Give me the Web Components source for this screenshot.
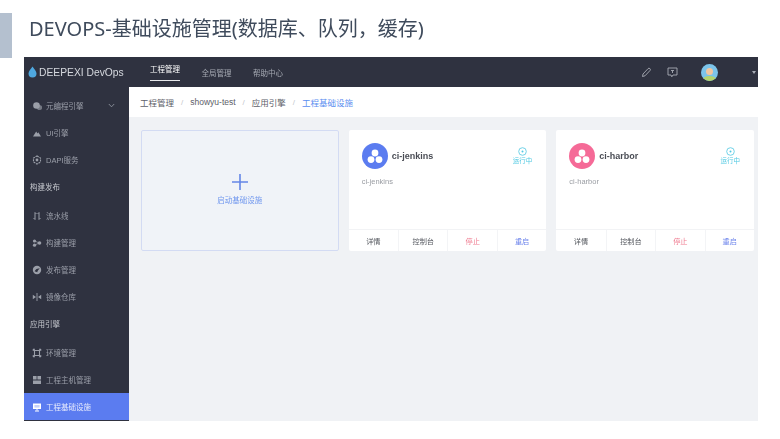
<!DOCTYPE html>
<html lang="zh-CN">
<head>
<meta charset="utf-8">
<title>DEVOPS</title>
<style>
  html, body { margin: 0; background: #fff; }
  body { width: 780px; height: 439px; overflow: hidden; font-family: "Liberation Sans", "Noto Sans CJK SC", sans-serif; }
</style>
</head>
<body>
<slide-page heading="DEVOPS-基础设施管理(数据库、队列，缓存)">
  <app-shell>
    <top-bar slot="top"></top-bar>
    <side-nav slot="side">
      <nav-item icon="chat" label="元编程引擎" arrow></nav-item>
      <nav-item icon="ui" label="UI引擎"></nav-item>
      <nav-item icon="dapi" label="DAPI服务"></nav-item>
      <nav-group label="构建发布"></nav-group>
      <nav-item icon="flow" label="流水线"></nav-item>
      <nav-item icon="build" label="构建管理"></nav-item>
      <nav-item icon="publish" label="发布管理"></nav-item>
      <nav-item icon="mirror" label="镜像仓库"></nav-item>
      <nav-group label="应用引擎"></nav-group>
      <nav-item icon="env" label="环境管理"></nav-item>
      <nav-item icon="host" label="工程主机管理"></nav-item>
      <nav-item icon="infra" label="工程基础设施" active></nav-item>
    </side-nav>
    <bread-crumb slot="crumb"></bread-crumb>
    <add-card label="启动基础设施"></add-card>
    <infra-card name="ci-jenkins" color="#5b7cf0"></infra-card>
    <infra-card name="ci-harbor" color="#f56a97"></infra-card>
  </app-shell>
</slide-page>

<script>
// icons for the side menu
const ICONS = {
  chat: '<circle cx="4.5" cy="4.5" r="3.3" fill="currentColor"/><circle cx="7.5" cy="6.5" r="2.6" fill="currentColor" opacity=".65"/>',
  ui: '<path d="M1 8.5 4.2 3.5 5.5 5.5 6.3 4.2 9 8.5Z" fill="currentColor"/>',
  dapi: '<path d="M5 1 8.5 3v4L5 9 1.5 7V3Z" fill="none" stroke="currentColor" stroke-width="1.1" stroke-dasharray="2 .8"/><circle cx="5" cy="5" r="1.4" fill="currentColor"/>',
  flow: '<path d="M3 1.5v7M3 8.5 1.5 7M3 1.5 4.5 3M7 1.5v7M7 1.5 5.5 3M7 8.5l1.5-1.5" fill="none" stroke="currentColor" stroke-width="1"/>',
  build: '<circle cx="2.5" cy="3" r="1.6" fill="currentColor"/><circle cx="2.5" cy="7.2" r="1.6" fill="currentColor"/><circle cx="7.5" cy="5" r="1.8" fill="currentColor"/><path d="M3 3 7 5 3 7" fill="none" stroke="currentColor" stroke-width=".7"/>',
  publish: '<circle cx="5" cy="5" r="4.2" fill="currentColor"/><path d="M2.6 6.2C4 3.6 6 3.2 7.8 3.6 6.6 4.4 5.8 5.6 5.2 7.2Z" fill="#2f3240"/>',
  mirror: '<path d="M5 1v8" stroke="currentColor" stroke-width=".9"/><path d="M.8 2.8 4 5 .8 7.2ZM9.2 2.8 6 5l3.2 2.2Z" fill="currentColor"/>',
  env: '<path d="M2.5 2.5h5v5h-5Z" fill="none" stroke="currentColor" stroke-width="1.1"/><path d="M1 1h2L1 3ZM9 1H7l2 2ZM1 9h2L1 7ZM9 9H7l2-2Z" fill="currentColor" stroke="currentColor" stroke-width=".5"/>',
  host: '<path d="M1 1h3.6v3.6H1ZM5.4 1H9v3.6H5.4ZM1 5.4h8V9H1Z" fill="currentColor"/>',
  infra: '<path d="M1 1.5h8v5.5H1Z" fill="currentColor"/><path d="M5 7v1.5M3 9h4" stroke="currentColor" stroke-width="1"/><path d="M2.4 3h5.2v2.6H2.4Z" fill="#5b7cf0" opacity=".35"/>'
};

class SlidePage extends HTMLElement {
  constructor() {
    super();
    this.attachShadow({ mode: "open" });
  }
  connectedCallback() {
    this.shadowRoot.innerHTML = `
      <style>
        :host { display: flex; flex-direction: column; width: 780px; height: 439px; filter: blur(.35px); }
        header { height: 57px; display: flex; align-items: flex-start; flex: none; }
        .mark { width: 12px; height: 45px; margin-top: 13px; background: #b4c0cf; }
        h1 { margin: 16px 0 0 17px; font: 400 20px/26px "Noto Sans", "Noto Sans CJK SC", sans-serif; color: #3f4b5c; white-space: nowrap; }
        .body { padding: 0 22px 18px 24px; flex: 1; display: flex; min-height: 0; }
      </style>
      <header><div class="mark"></div><h1>${this.getAttribute("heading")}</h1></header>
      <div class="body"><slot></slot></div>
    `;
  }
}

class AppShell extends HTMLElement {
  constructor() {
    super();
    this.attachShadow({ mode: "open" });
  }
  connectedCallback() {
    this.shadowRoot.innerHTML = `
      <style>
        :host { display: grid; flex: 1; grid-template-columns: 105px 1fr; grid-template-rows: 30px 30px 1fr; background: #f0f2f5; }
        .top { grid-column: 1 / 3; display: flex; }
        .side { grid-row: 2 / 4; display: flex; min-height: 0; }
        .crumb { display: flex; }
        .cards { display: grid; grid-template-columns: repeat(3, 1fr); grid-template-rows: 121px; gap: 10px; padding: 13px 4px 0 12px; }
      </style>
      <div class="top"><slot name="top"></slot></div>
      <div class="side"><slot name="side"></slot></div>
      <div class="crumb"><slot name="crumb"></slot></div>
      <div class="cards"><slot></slot></div>
    `;
  }
}

class TopBar extends HTMLElement {
  constructor() {
    super();
    this.attachShadow({ mode: "open" });
  }
  connectedCallback() {
    this.shadowRoot.innerHTML = `
      <style>
        :host { display: flex; flex: 1; align-items: center; background: #2f3240; color: #fff; height: 30px; }
        .logo { display: flex; align-items: center; width: 126px; flex: none; padding-left: 4px; box-sizing: border-box; font-size: 10.3px; color: #d5d8de; white-space: nowrap; }
        .logo svg { margin-right: 2px; }
        nav { display: flex; gap: 21.5px; align-self: stretch; font-size: 7.5px; color: #a5a9b2; }
        nav span { display: flex; align-items: center; width: 30px; white-space: nowrap; box-sizing: border-box; }
        nav .on { color: #fff; border-bottom: 1px solid #e8e9ec; height: 23.5px; padding-top: 1px; margin-top: 0; }
        .tools { margin-left: auto; display: flex; align-items: center; color: #a9adb6; }
        .pen { margin-right: 15px; }
        .msg { margin-right: 23px; }
        .ava { width: 17px; height: 17px; border-radius: 50%; background: #7cc4ea; position: relative; overflow: hidden; margin-right: 34px; }
        .ava i { position: absolute; left: 5px; top: 4px; width: 7px; height: 7px; border-radius: 50%; background: #f2c6a0; }
        .ava b { position: absolute; left: 2px; top: 12px; width: 13px; height: 6px; background: #b6d46a; border-radius: 50%; }
        .caret { width: 0; height: 0; border: 2.5px solid transparent; border-top: 3px solid #a9adb6; border-bottom: 0; margin-right: 2px; }
      </style>
      <div class="logo">
        <svg width="9" height="12" viewBox="0 0 9 12"><path d="M4.5 .5C6 3 8.5 5 8.5 7.6A4 4 0 0 1 .5 7.6C.5 5 3 3 4.5 .5Z" fill="#4fa8e0"/></svg>
        DEEPEXI DevOps
      </div>
      <nav><span class="on">工程管理</span><span>全局管理</span><span>帮助中心</span></nav>
      <div class="tools">
        <svg class="pen" width="11" height="11" viewBox="0 0 11 11" fill="none" stroke="currentColor" stroke-width=".9"><path d="M1.5 9.5 2 7l5-5.3a1.2 1.2 0 0 1 2 1.8L4 8.8Z"/></svg>
        <svg class="msg" width="11" height="11" viewBox="0 0 11 11" fill="none" stroke="currentColor" stroke-width=".9"><path d="M1 1h9v7H6L4.8 9.8 4 8H1Z"/><path d="M4 3.5h3M5.5 3.5v2.5"/></svg>
        <div class="ava"><i></i><b></b></div>
        <div class="caret"></div>
      </div>
    `;
  }
}

class SideNav extends HTMLElement {
  constructor() {
    super();
    this.attachShadow({ mode: "open" });
  }
  connectedCallback() {
    this.shadowRoot.innerHTML = `
      <style>
        :host { display: flex; flex-direction: column; flex: 1; background: #2f3240; padding-top: 5px; overflow: hidden; }
      </style>
      <slot></slot>
    `;
  }
}

class NavItem extends HTMLElement {
  constructor() {
    super();
    this.attachShadow({ mode: "open" });
  }
  connectedCallback() {
    const icon = ICONS[this.getAttribute("icon")] || "";
    const arrow = this.hasAttribute("arrow")
      ? '<svg class="arrow" width="7" height="5" viewBox="0 0 7 5" fill="none" stroke="currentColor" stroke-width=".8"><path d="M.8 1 3.5 3.8 6.2 1"/></svg>'
      : "";
    this.shadowRoot.innerHTML = `
      <style>
        :host { display: flex; align-items: center; height: 27px; padding-left: 8px; font-size: 7.5px; color: #9b9fa9; white-space: nowrap; flex: none; }
        :host([active]) { background: #5b7cf0; color: #e8ecfd; }
        svg.ico { margin-right: 4px; flex: none; }
        :host([active]) svg.ico { color: #fff; }
        .arrow { margin-left: auto; margin-right: 14px; }
      </style>
      <svg class="ico" width="10" height="10" viewBox="0 0 10 10">${icon}</svg>
      <span>${this.getAttribute("label")}</span>
      ${arrow}
    `;
  }
}

class NavGroup extends HTMLElement {
  constructor() {
    super();
    this.attachShadow({ mode: "open" });
  }
  connectedCallback() {
    this.shadowRoot.innerHTML = `
      <style>
        :host { display: flex; align-items: center; height: 29px; padding: 1px 0 3px 6px; box-sizing: border-box; font-size: 7.5px; color: #c6c8ce; flex: none; }
      </style>
      <span>${this.getAttribute("label")}</span>
    `;
  }
}

class BreadCrumb extends HTMLElement {
  constructor() {
    super();
    this.attachShadow({ mode: "open" });
  }
  connectedCallback() {
    this.shadowRoot.innerHTML = `
      <style>
        :host { display: flex; flex: 1; align-items: center; gap: 7px; background: #fff; padding: 0 0 0 11px; font-size: 8.5px; color: #5d6068; white-space: nowrap; }
        i { font-style: normal; color: #c3c6cc; font-size: 8px; }
        .now { color: #5b8ef0; }
      </style>
      <span>工程管理</span><i>/</i><span>showyu-test</span><i>/</i><span>应用引擎</span><i>/</i><span class="now">工程基础设施</span>
    `;
  }
}

class AddCard extends HTMLElement {
  constructor() {
    super();
    this.attachShadow({ mode: "open" });
  }
  connectedCallback() {
    this.shadowRoot.innerHTML = `
      <style>
        :host { display: flex; flex-direction: column; align-items: center; justify-content: center; box-sizing: border-box; border: 1px solid #d3dbf3; border-radius: 2px; background: #f0f3f8; color: #6f96ee; font-size: 7.5px; padding-bottom: 2px; }
        svg { margin-bottom: 4px; }
      </style>
      <svg width="16" height="16" viewBox="0 0 16 16"><path d="M8 0v16M0 8h16" stroke="#6486e6" stroke-width="1.6"/></svg>
      <span>${this.getAttribute("label")}</span>
    `;
  }
}

class InfraCard extends HTMLElement {
  constructor() {
    super();
    this.attachShadow({ mode: "open" });
  }
  connectedCallback() {
    const name = this.getAttribute("name");
    const color = this.getAttribute("color");
    this.shadowRoot.innerHTML = `
      <style>
        :host { display: flex; flex-direction: column; background: #fff; border-radius: 2px; overflow: hidden; }
        .main { flex: 1; padding: 13px 13px 0 13px; position: relative; }
        .head { display: flex; align-items: center; }
        .logo { width: 26px; height: 26px; border-radius: 50%; background: ${color}; display: flex; align-items: center; justify-content: center; flex: none; margin-right: 4px; }
        .name { font-size: 9px; font-weight: 700; color: #4a4d55; }
        .status { margin-left: auto; display: flex; flex-direction: column; align-items: center; font-size: 6.5px; line-height: 8px; color: #4fc8e2; margin-right: 1px; }
        .status svg { margin-bottom: 1px; }
        .desc { margin-top: 8px; font-size: 7.5px; color: #9a9da3; }
        .foot { height: 21px; flex: none; border-top: 1px solid #f2f3f5; display: grid; grid-template-columns: repeat(4, 1fr); font-size: 7.2px; color: #55585f; }
        .foot span { display: flex; align-items: center; justify-content: center; border-left: 1px solid #f3f4f6; }
        .foot span:first-child { border-left: 0; }
        .stop { color: #ef7a8f; }
        .restart { color: #6f86ec; }
      </style>
      <div class="main">
        <div class="head">
          <div class="logo">
            <svg width="16" height="15" viewBox="0 0 16 15" fill="#fff"><circle cx="8" cy="4" r="3.4"/><circle cx="4" cy="10.6" r="3.4"/><circle cx="12" cy="10.6" r="3.4"/></svg>
          </div>
          <span class="name">${name}</span>
          <div class="status">
            <svg width="9" height="9" viewBox="0 0 9 9"><circle cx="4.5" cy="4.5" r="3.8" fill="none" stroke="#4fc8e2" stroke-width=".8"/><circle cx="4.5" cy="4.5" r="1" fill="#4fc8e2"/></svg>
            运行中
          </div>
        </div>
        <div class="desc">${name}</div>
      </div>
      <div class="foot"><span>详情</span><span>控制台</span><span class="stop">停止</span><span class="restart">重启</span></div>
    `;
  }
}

customElements.define("slide-page", SlidePage);
customElements.define("app-shell", AppShell);
customElements.define("top-bar", TopBar);
customElements.define("side-nav", SideNav);
customElements.define("nav-item", NavItem);
customElements.define("nav-group", NavGroup);
customElements.define("bread-crumb", BreadCrumb);
customElements.define("add-card", AddCard);
customElements.define("infra-card", InfraCard);
</script>
</body>
</html>
